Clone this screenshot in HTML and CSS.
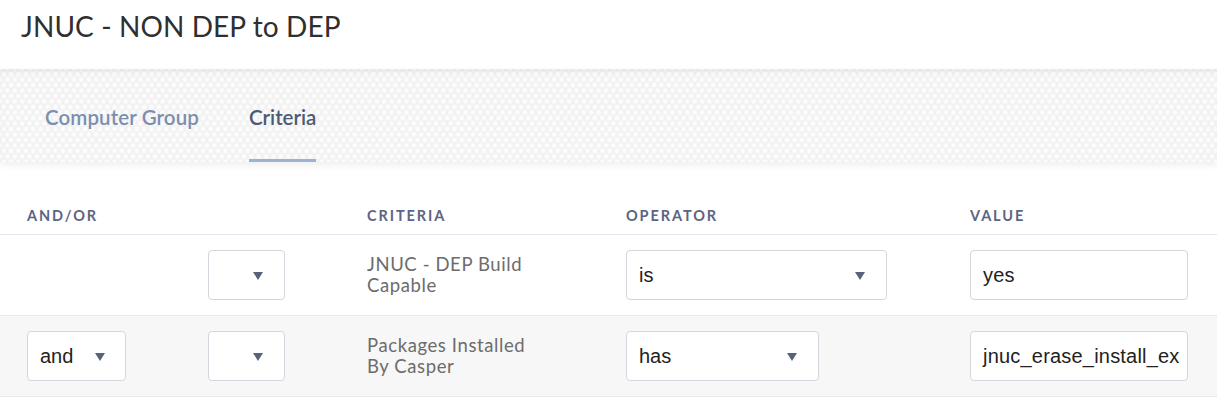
FILE: index.html
```html
<!DOCTYPE html>
<html>
<head>
<meta charset="utf-8">
<link rel="stylesheet" href="styles.css">
</head>
<body>
<header class="page-head">
  <h1 class="title">JNUC - NON DEP to DEP</h1>
</header>
<nav class="tabs">
  <a class="tab">Computer Group</a>
  <a class="tab active">Criteria</a>
</nav>
<section class="criteria">
  <div class="row head">
    <div class="cell c-andor">AND/OR</div>
    <div class="cell c-paren"></div>
    <div class="cell c-crit">CRITERIA</div>
    <div class="cell c-op">OPERATOR</div>
    <div class="cell c-val">VALUE</div>
  </div>
  <div class="row">
    <div class="cell c-andor"></div>
    <div class="cell c-paren"><div class="select small"><span class="sel-text"></span><span class="arrow"></span></div></div>
    <div class="cell c-crit"><span class="crit-text">JNUC - DEP Build<br>Capable</span></div>
    <div class="cell c-op"><div class="select op-wide"><span class="sel-text">is</span><span class="arrow"></span></div></div>
    <div class="cell c-val"><div class="input">yes</div></div>
  </div>
  <div class="row alt">
    <div class="cell c-andor"><div class="select andor"><span class="sel-text">and</span><span class="arrow"></span></div></div>
    <div class="cell c-paren"><div class="select small"><span class="sel-text"></span><span class="arrow"></span></div></div>
    <div class="cell c-crit"><span class="crit-text">Packages Installed<br>By Casper</span></div>
    <div class="cell c-op"><div class="select op-narrow"><span class="sel-text">has</span><span class="arrow"></span></div></div>
    <div class="cell c-val"><div class="input">jnuc_erase_install_ex</div></div>
  </div>
</section>
</body>
</html>
```

FILE: styles.css
```css
* { box-sizing: border-box; }
html, body { margin: 0; padding: 0; background: #fff; }
body { font-family: Lato, "Open Sans", sans-serif; color: #333; width: 1217px; overflow: hidden; }

.page-head { height: 69px; padding: 10px 0 0 21px; }
.title { margin: 0; font-weight: 400; font-size: 28px; line-height: 32px; color: #2f2f2f; letter-spacing: 0.1px; }

.tabs {
  height: 93px;
  display: flex;
  align-items: stretch;
  padding-left: 45px;
  gap: 50px;
  background-color: #f6f6f6;
  background-image:
    radial-gradient(circle at 50% 45%, #fdfdfd 0, #fbfbfb 2px, #efefef 3.2px, rgba(246,246,246,0) 3.8px),
    radial-gradient(circle at 50% 45%, #fdfdfd 0, #fbfbfb 2px, #efefef 3.2px, rgba(246,246,246,0) 3.8px);
  background-size: 7.4px 11px, 7.4px 11px;
  background-position: 0 0, 3.7px 5.5px;
  box-shadow: inset 0 5px 6px -3px rgba(0,0,0,0.07), 0 3px 7px rgba(0,0,0,0.07);
  position: relative;
}
.tab {
  display: flex;
  align-items: center;
  font-size: 20.5px;
  font-weight: 600;
  letter-spacing: 0.1px;
  color: #7c8eb0;
  border-bottom: 3px solid transparent;
  padding-top: 6px;
}
.tab.active { color: #4e5a74; border-bottom-color: #9db2d4; letter-spacing: 0; }

.row { display: flex; align-items: center; padding-left: 27px; height: 81px; border-bottom: 1px solid #e7e9ef; }
.row.head { height: 73px; align-items: flex-end; padding-bottom: 10px; border-bottom-color: #e3e6ee; }
.row.alt { background: #f7f7f7; }
.cell { flex: none; }
.c-andor { width: 181px; }
.c-paren { width: 159px; }
.c-crit { width: 259px; }
.c-op { width: 344px; }
.c-val { width: 218px; }

.row.head .cell { font-size: 14.5px; font-weight: 700; letter-spacing: 1.9px; color: #5b6582; }

.crit-text { display: block; font-size: 18.5px; line-height: 21px; letter-spacing: 0.6px; color: #6c6c6c; }

.select, .input {
  height: 50px;
  border: 1px solid #d3d6dc;
  border-radius: 4px;
  background: #fff;
  display: flex;
  align-items: center;
  font-family: "Liberation Sans", Arial, sans-serif;
  font-size: 20px;
  color: #222;
}
.select { justify-content: space-between; padding: 0 21px 0 12px; }
.select.small { width: 77px; }
.select.andor { width: 99px; padding-right: 20px; }
.select.op-wide { width: 261px; }
.select.op-narrow { width: 193px; }
.arrow { width: 0; height: 0; border-left: 5px solid transparent; border-right: 5px solid transparent; border-top: 8px solid #5a6279; margin-top: 2px; }
.input { width: 218px; padding: 0 2px 0 12px; white-space: nowrap; overflow: hidden; letter-spacing: 0.2px; }
```
